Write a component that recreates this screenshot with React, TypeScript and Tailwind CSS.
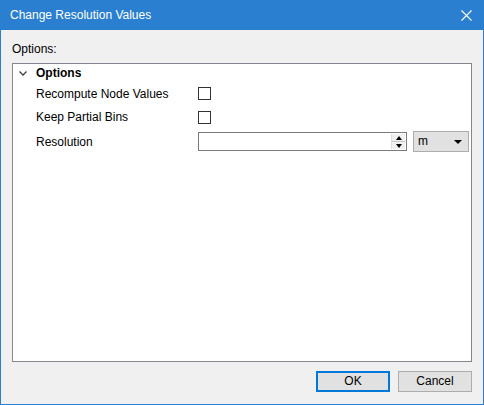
import React from 'react';

const font = { fontFamily: '"Liberation Sans", Arial, sans-serif' };

function Checkbox() {
  return <div className="w-[13px] h-[13px] border border-[#333333] bg-white" />;
}

export default function App() {
  return (
    <div className="w-[484px] h-[405px] bg-[#2b7fd0] flex flex-col px-px pb-px text-[12px] text-black" style={font}>
      <div className="h-[30px] flex items-center justify-between pl-[9px] pr-[11px] text-white">
        <span className="leading-[15px]">Change Resolution Values</span>
        <svg width="11" height="11" viewBox="0 0 11 11" className="text-white">
          <path d="M0.5 0.5 L10.5 10.5 M10.5 0.5 L0.5 10.5" stroke="currentColor" strokeWidth="1.1" />
        </svg>
      </div>

      <div className="flex-1 bg-[#f0f0f0] flex flex-col pt-[12px] pb-[12px] px-[11px]">
        <div className="leading-[15px] mb-[6px]">Options:</div>

        <div className="flex-1 bg-white border border-[#828790] flex flex-col">
          <div className="h-[18px] flex items-center pl-[6px]">
            <svg width="8" height="5" viewBox="0 0 8 5" className="mr-[9px]">
              <path d="M0.5 0.5 L4 4 L7.5 0.5" fill="none" stroke="#404040" strokeWidth="1.3" />
            </svg>
            <span className="font-bold">Options</span>
          </div>

          <div className="h-[23px] flex items-center pl-[23px]">
            <span className="w-[162px]">Recompute Node Values</span>
            <Checkbox />
          </div>
          <div className="h-[24px] flex items-center pl-[23px]">
            <span className="w-[162px]">Keep Partial Bins</span>
            <Checkbox />
          </div>
          <div className="h-[25px] flex items-center pl-[23px]">
            <span className="w-[162px]">Resolution</span>
            <div className="w-[209px] h-[19px] border border-[#7a7a7a] bg-white flex justify-end items-stretch p-px">
              <div className="w-[14px] flex flex-col bg-[#f0f0f0] border-l border-[#dcdcdc]">
                <div className="flex-1 flex items-center justify-center border-b border-[#c8c8c8]">
                  <div className="w-0 h-0 border-l-[3px] border-r-[3px] border-b-[4px] border-l-transparent border-r-transparent border-b-black" />
                </div>
                <div className="flex-1 flex items-center justify-center">
                  <div className="w-0 h-0 border-l-[3px] border-r-[3px] border-t-[4px] border-l-transparent border-r-transparent border-t-black" />
                </div>
              </div>
            </div>
            <div className="ml-[6px] w-[56px] h-[21px] border border-[#adadad] bg-[#e1e1e1] flex items-center justify-between pl-[4px] pr-[6px]">
              <span className="leading-[15px]">m</span>
              <div className="w-0 h-0 border-l-[4px] border-r-[4px] border-t-[4px] border-l-transparent border-r-transparent border-t-black" />
            </div>
          </div>
        </div>

        <div className="flex justify-end gap-[8px] mt-[9px]">
          <button className="w-[74px] h-[21px] bg-[#e1e1e1] border-2 border-[#0078d7] flex items-center justify-center leading-[15px]">OK</button>
          <button className="w-[74px] h-[21px] bg-[#e1e1e1] border border-[#adadad] flex items-center justify-center leading-[15px]">Cancel</button>
        </div>
      </div>
    </div>
  );
}
